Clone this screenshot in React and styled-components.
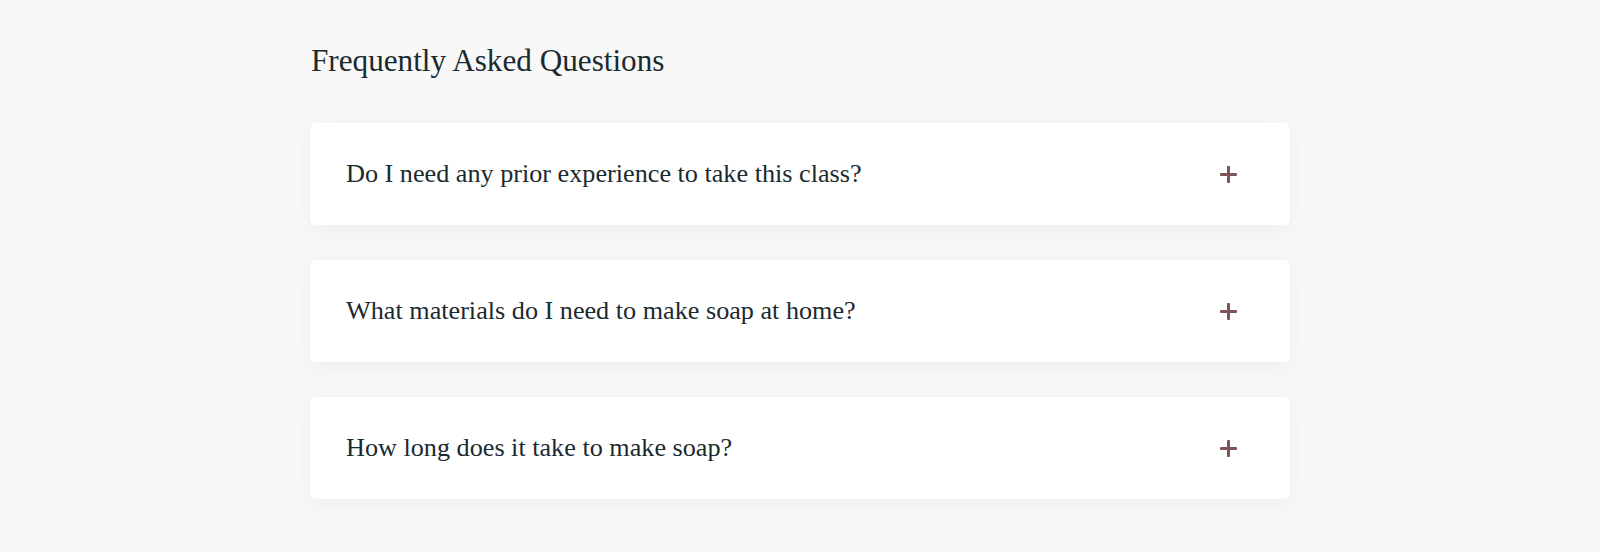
import React from "react";
import styled, { createGlobalStyle } from "styled-components";

const GlobalStyle = createGlobalStyle`
  html, body {
    margin: 0;
    padding: 0;
    background: #f8f8f8;
  }
  body {
    font-family: "Liberation Serif", "DejaVu Serif", serif;
    color: #1b2a2f;
  }
`;

const Section = styled.section`
  width: 980px;
  margin: 0 auto;
  padding: 41px 0 50px;
`;

const Title = styled.h2`
  margin: 0 0 42px 1px;
  font-size: 31.2px;
  font-weight: 400;
  line-height: 40px;
  color: #1b2a2f;
`;

const List = styled.div`
  display: flex;
  flex-direction: column;
  gap: 35px;
`;

const Item = styled.div`
  background: #ffffff;
  border-radius: 6px;
  box-shadow: 0 4px 22px rgba(0, 0, 0, 0.05);
`;

const Question = styled.button`
  width: 100%;
  height: 102px;
  display: flex;
  align-items: center;
  justify-content: space-between;
  padding: 0 53px 0 36px;
  border: none;
  background: transparent;
  cursor: pointer;
  font-family: inherit;
  font-size: 26.2px;
  font-weight: 400;
  color: #1b2a2f;
  text-align: left;
`;

const PlusIcon = () => (
  <svg width="17" height="17" viewBox="0 0 17 17">
    <path d="M8.5 1.2v14.6M1.2 8.5h14.6" stroke="#7d5558" strokeWidth="3" strokeLinecap="round" />
  </svg>
);

const questions = [
  { id: 1, text: "Do I need any prior experience to take this class?" },
  { id: 2, text: "What materials do I need to make soap at home?" },
  { id: 3, text: "How long does it take to make soap?" },
];

const App = () => {
  return (
    <>
      <GlobalStyle />
      <Section>
        <Title>Frequently Asked Questions</Title>
        <List>
          {questions.map(item => (
            <Item key={item.id}>
              <Question>
                <span>{item.text}</span>
                <PlusIcon />
              </Question>
            </Item>
          ))}
        </List>
      </Section>
    </>
  );
};

export default App;
